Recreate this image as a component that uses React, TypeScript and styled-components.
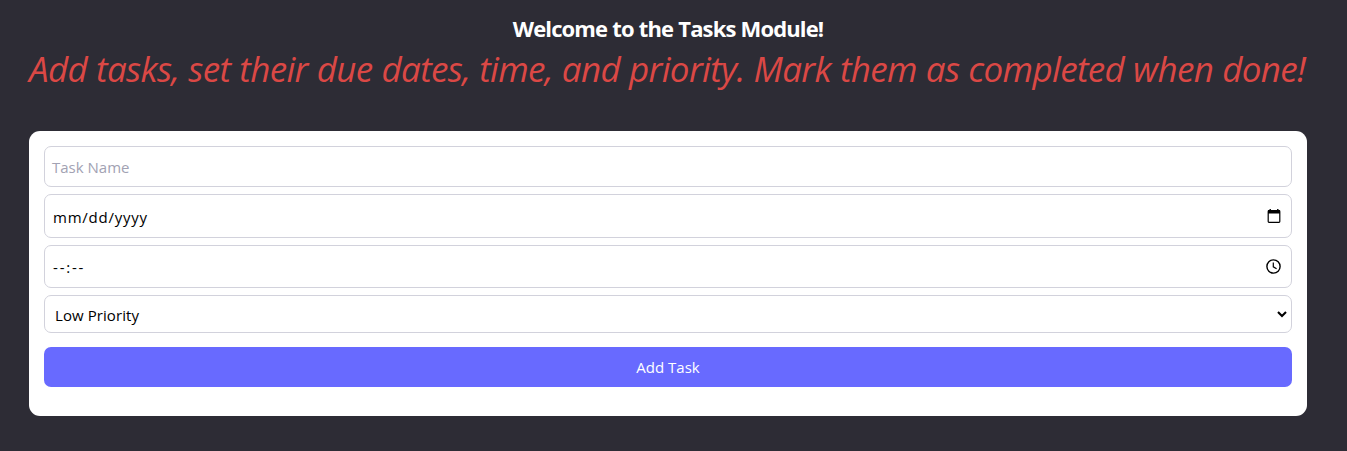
import React from "react";
import styled, { createGlobalStyle } from "styled-components";

const GlobalStyle = createGlobalStyle`
  *, *::before, *::after { box-sizing: border-box; }
  body {
    margin: 0;
    background: #2d2c35;
    font-family: "Open Sans", "Noto Sans", sans-serif;
  }
`;

const Page = styled.main`
  display: flex;
  flex-direction: column;
  height: 451px;
  padding: 14px 40px 0 29px;
  overflow: hidden;
`;

const Title = styled.h1`
  margin: 0;
  height: 29px;
  text-align: center;
  font-size: 22px;
  line-height: 29px;
  font-weight: 700;
  letter-spacing: -0.88px;
  word-spacing: 0.3px;
  color: #fff;
  white-space: nowrap;
`;

const Intro = styled.p`
  margin: 6px 0 0;
  height: 40px;
  font-size: 35px;
  line-height: 40px;
  font-style: italic;
  letter-spacing: -0.66px;
  word-spacing: 0.5px;
  color: #db4845;
  white-space: nowrap;
`;

const Card = styled.form`
  display: flex;
  flex-direction: column;
  gap: 7px;
  margin: 42px 0 0;
  height: 285px;
  padding: 15px;
  border-radius: 11px;
  background: #fff;
`;

const Field = styled.div<{ $height: number; $left?: number; $right?: number }>`
  display: flex;
  align-items: center;
  justify-content: space-between;
  flex: none;
  height: ${(p) => p.$height}px;
  padding: 0 ${(p) => p.$right ?? 10}px 0 ${(p) => p.$left ?? 8}px;
  border: 1px solid #d2d2dc;
  border-radius: 7px;
`;

const Value = styled.span<{ $muted?: boolean; $spacing?: number; $top?: number }>`
  font-size: 15px;
  line-height: 22px;
  padding-top: ${(p) => p.$top ?? 2}px;
  letter-spacing: ${(p) => p.$spacing ?? 0}px;
  color: ${(p) => (p.$muted ? "#a2a2b3" : "#000")};
`;

const SubmitButton = styled.button`
  flex: none;
  height: 40px;
  margin-top: 7px;
  padding: 0;
  border: 0;
  border-radius: 7px;
  background: #686aff;
  color: #fff;
  font: 400 15px/22px "Open Sans", "Noto Sans", sans-serif;
`;

const CalendarIcon = () => (
  <svg width="14" height="15" viewBox="0 0 14 15" fill="none">
    <rect x="1.2" y="1.7" width="11.6" height="11.6" rx="0.8" stroke="#000" strokeWidth="1.2" />
    <path d="M1 1.3h12v3.2H1zM2.5 0h1.4v2H2.5zM10.1 0h1.4v2h-1.4z" fill="#000" />
  </svg>
);

const ClockIcon = () => (
  <svg width="15" height="15" viewBox="0 0 15 15" fill="none" stroke="#000">
    <circle cx="7.5" cy="7.5" r="6.6" strokeWidth="1.4" />
    <path d="M7.3 3.6v4.2l3.3 2" strokeWidth="1.2" />
  </svg>
);

const ChevronIcon = () => (
  <svg width="10" height="8" viewBox="0 0 10 8" fill="none">
    <path d="M1 1.9l4 4 4-4" stroke="#000" strokeWidth="2.1" />
  </svg>
);

export default function App() {
  return (
    <>
      <GlobalStyle />
      <Page>
        <Title>Welcome to the Tasks Module!</Title>
        <Intro>Add tasks, set their due dates, time, and priority. Mark them as completed when done!</Intro>
        <Card>
          <Field $height={41} $left={7}>
            <Value $muted $top={0}>Task Name</Value>
          </Field>
          <Field $height={44}>
            <Value $spacing={0.75}>mm/dd/yyyy</Value>
            <CalendarIcon />
          </Field>
          <Field $height={43}>
            <Value $spacing={1.8} $top={0}>--:--</Value>
            <ClockIcon />
          </Field>
          <Field $height={38} $left={10} $right={4}>
            <Value $spacing={0.08}>Low Priority</Value>
            <ChevronIcon />
          </Field>
          <SubmitButton type="button">Add Task</SubmitButton>
        </Card>
      </Page>
    </>
  );
}
